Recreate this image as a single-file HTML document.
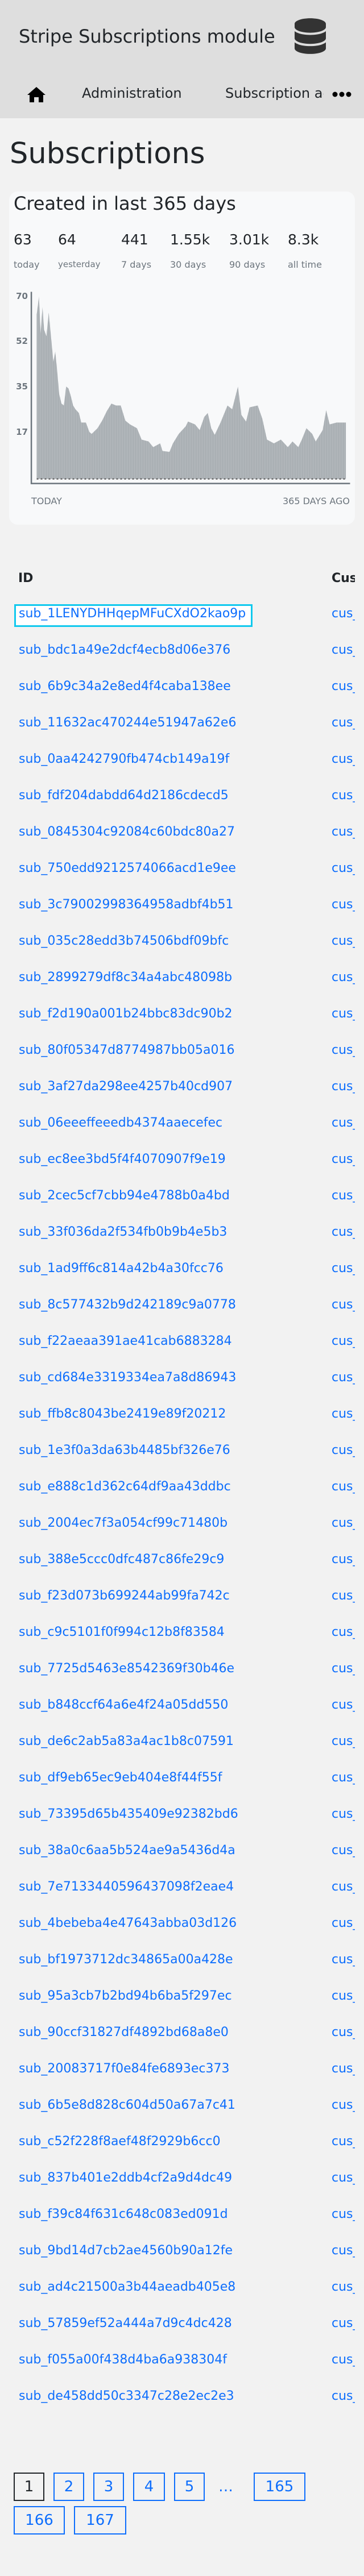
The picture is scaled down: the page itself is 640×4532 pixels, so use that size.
<!DOCTYPE html>
<html><head><meta charset="utf-8">
<style>
*{margin:0;padding:0;box-sizing:border-box}
body{width:640px;height:4532px;background:#f2f2f2;font-family:"DejaVu Sans","Liberation Sans",sans-serif;color:#212529;position:relative;overflow:hidden}
.a{position:absolute;white-space:nowrap;line-height:1}
#hdr{position:absolute;left:0;top:0;width:640px;height:208px;background:#dedede}
#card{position:absolute;left:16px;top:337px;width:608px;height:586px;background:#f8f9fa;border-radius:15px}
.n{font-size:25px;color:#212529}
.l{font-size:16px;color:#6c757d}
.y{font-size:15px;font-weight:bold;color:#6c757d;width:40px;text-align:right;left:9px}
#rows{position:absolute;left:0;top:1048px;width:624px;overflow:hidden}
.r{height:64px;line-height:64px;font-size:22px;position:relative}
.r a{color:#0d6efd;text-decoration:none;position:absolute;left:33px}
.r b{color:#0d6efd;font-weight:normal;position:absolute;left:583px}
.pg{position:absolute;height:50px;border:2px solid #0d6efd;color:#0d6efd;font-size:26px;line-height:46px;text-align:center}
</style></head><body>
<div id="hdr"></div>
<div class="a" style="left:33px;top:48px;font-size:32px;color:#212529">Stripe Subscriptions module</div>
<svg style="position:absolute;left:518px;top:32px" width="55" height="63" viewBox="0 0 448 512"><path fill="#333" d="M448 80v48c0 44.2-100.3 80-224 80S0 172.2 0 128V80C0 35.8 100.3 0 224 0S448 35.8 448 80zM393.2 214.7c20.8-7.4 39.9-16.9 54.8-28.6V288c0 44.2-100.3 80-224 80S0 332.2 0 288V186.1c14.9 11.8 34 21.2 54.8 28.6C99.7 230.7 159.5 240 224 240s124.3-9.3 169.2-25.3zM0 346.1c14.9 11.8 34 21.2 54.8 28.6C99.7 390.7 159.5 400 224 400s124.3-9.3 169.2-25.3c20.8-7.4 39.9-16.9 54.8-28.6V432c0 44.2-100.3 80-224 80S0 476.2 0 432V346.1z"/></svg>
<svg style="position:absolute;left:48px;top:153px" width="32" height="27" viewBox="0 0 32 27"><path d="M16 0 L32 14 L28 14 L28 27 L20 27 L20 18 L12 18 L12 27 L4 27 L4 14 L0 14 Z" fill="#000"/></svg>
<div class="a" style="left:144px;top:152px;font-size:24px">Administration</div>
<div class="a" style="left:396px;top:152px;font-size:24px;width:173px;overflow:hidden">Subscription admin</div>
<svg style="position:absolute;left:584px;top:160px" width="34" height="12"><circle cx="5" cy="6" r="4.5" fill="#000"/><circle cx="17" cy="6" r="4.5" fill="#000"/><circle cx="29" cy="6" r="4.5" fill="#000"/></svg>

<div class="a" style="left:17px;top:245px;font-size:51px">Subscriptions</div>
<div id="card"></div>
<div class="a" style="left:24px;top:342px;font-size:32px">Created in last 365 days</div>
<div class="a n" style="left:24px;top:409px">63</div>
<div class="a n" style="left:102px;top:409px">64</div>
<div class="a n" style="left:213px;top:409px">441</div>
<div class="a n" style="left:299px;top:409px">1.55k</div>
<div class="a n" style="left:403px;top:409px">3.01k</div>
<div class="a n" style="left:506px;top:409px">8.3k</div>
<div class="a l" style="left:24px;top:458px">today</div>
<div class="a l" style="left:102px;top:458px;font-size:15px">yesterday</div>
<div class="a l" style="left:213px;top:458px">7 days</div>
<div class="a l" style="left:299px;top:458px">30 days</div>
<div class="a l" style="left:403px;top:458px">90 days</div>
<div class="a l" style="left:506px;top:458px">all time</div>

<svg style="position:absolute;left:0;top:480px" width="640" height="500" viewBox="0 0 1568 1500" preserveAspectRatio="none">
<defs><pattern id="p" width="3.675" height="10" patternUnits="userSpaceOnUse"><rect width="3.675" height="10" fill="#b7bcc0"/><rect width="0.9" height="10" fill="#8d949a"/></pattern></defs>
<path fill="url(#p)" d="M158,1088 L158,220 L168,125 L175,320 L183,180 L190,300 L200,335 L210,210 L220,340 L230,470 L238,415 L245,500 L255,640 L265,690 L275,700 L285,600 L295,610 L305,650 L315,700 L325,720 L340,740 L350,790 L370,790 L385,840 L395,850 L420,820 L440,780 L460,730 L480,690 L500,700 L520,700 L540,780 L560,800 L590,820 L610,880 L640,890 L660,920 L690,900 L700,940 L730,945 L745,900 L770,850 L800,810 L810,785 L840,800 L860,830 L880,760 L895,740 L910,820 L925,855 L950,790 L980,700 L1000,720 L1025,600 L1040,750 L1060,785 L1075,710 L1110,700 L1130,770 L1150,880 L1180,900 L1210,880 L1240,920 L1260,890 L1285,920 L1300,880 L1320,820 L1345,850 L1360,890 L1390,830 L1405,725 L1420,800 L1450,790 L1490,790 L1490,1088 Z"/>
<path d="M158,1088 H1490" stroke="#555" stroke-width="2" stroke-dasharray="3 4" vector-effect="non-scaling-stroke"/>
<path d="M135,100 V1112 H1508" fill="none" stroke="#6c757d" stroke-width="2.5" vector-effect="non-scaling-stroke"/>
</svg>
<div class="a y" style="top:514px">70</div>
<div class="a y" style="top:593px">52</div>
<div class="a y" style="top:673px">35</div>
<div class="a y" style="top:753px">17</div>
<div class="a" style="left:55px;top:874px;font-size:16px;color:#6c757d">TODAY</div>
<div class="a" style="left:455px;width:160px;text-align:right;top:874px;font-size:16px;color:#6c757d">365 DAYS AGO</div>

<div class="a" style="left:32px;top:1007px;font-size:22px;font-weight:bold">ID</div>
<div class="a" style="left:583px;top:1007px;font-size:22px;font-weight:bold;width:41px;overflow:hidden">Customer</div>
<div style="position:absolute;left:25px;top:1063px;width:419px;height:40px;border:3px solid #11c9ee;background:#fff"></div>
<div id="rows">
<div class="r"><a>sub_1LENYDHHqepMFuCXdO2kao9p</a><b>cus_abc</b></div>
<div class="r"><a>sub_bdc1a49e2dcf4ecb8d06e376</a><b>cus_abc</b></div>
<div class="r"><a>sub_6b9c34a2e8ed4f4caba138ee</a><b>cus_abc</b></div>
<div class="r"><a>sub_11632ac470244e51947a62e6</a><b>cus_abc</b></div>
<div class="r"><a>sub_0aa4242790fb474cb149a19f</a><b>cus_abc</b></div>
<div class="r"><a>sub_fdf204dabdd64d2186cdecd5</a><b>cus_abc</b></div>
<div class="r"><a>sub_0845304c92084c60bdc80a27</a><b>cus_abc</b></div>
<div class="r"><a>sub_750edd9212574066acd1e9ee</a><b>cus_abc</b></div>
<div class="r"><a>sub_3c79002998364958adbf4b51</a><b>cus_abc</b></div>
<div class="r"><a>sub_035c28edd3b74506bdf09bfc</a><b>cus_abc</b></div>
<div class="r"><a>sub_2899279df8c34a4abc48098b</a><b>cus_abc</b></div>
<div class="r"><a>sub_f2d190a001b24bbc83dc90b2</a><b>cus_abc</b></div>
<div class="r"><a>sub_80f05347d8774987bb05a016</a><b>cus_abc</b></div>
<div class="r"><a>sub_3af27da298ee4257b40cd907</a><b>cus_abc</b></div>
<div class="r"><a>sub_06eeeffeeedb4374aaecefec</a><b>cus_abc</b></div>
<div class="r"><a>sub_ec8ee3bd5f4f4070907f9e19</a><b>cus_abc</b></div>
<div class="r"><a>sub_2cec5cf7cbb94e4788b0a4bd</a><b>cus_abc</b></div>
<div class="r"><a>sub_33f036da2f534fb0b9b4e5b3</a><b>cus_abc</b></div>
<div class="r"><a>sub_1ad9ff6c814a42b4a30fcc76</a><b>cus_abc</b></div>
<div class="r"><a>sub_8c577432b9d242189c9a0778</a><b>cus_abc</b></div>
<div class="r"><a>sub_f22aeaa391ae41cab6883284</a><b>cus_abc</b></div>
<div class="r"><a>sub_cd684e3319334ea7a8d86943</a><b>cus_abc</b></div>
<div class="r"><a>sub_ffb8c8043be2419e89f20212</a><b>cus_abc</b></div>
<div class="r"><a>sub_1e3f0a3da63b4485bf326e76</a><b>cus_abc</b></div>
<div class="r"><a>sub_e888c1d362c64df9aa43ddbc</a><b>cus_abc</b></div>
<div class="r"><a>sub_2004ec7f3a054cf99c71480b</a><b>cus_abc</b></div>
<div class="r"><a>sub_388e5ccc0dfc487c86fe29c9</a><b>cus_abc</b></div>
<div class="r"><a>sub_f23d073b699244ab99fa742c</a><b>cus_abc</b></div>
<div class="r"><a>sub_c9c5101f0f994c12b8f83584</a><b>cus_abc</b></div>
<div class="r"><a>sub_7725d5463e8542369f30b46e</a><b>cus_abc</b></div>
<div class="r"><a>sub_b848ccf64a6e4f24a05dd550</a><b>cus_abc</b></div>
<div class="r"><a>sub_de6c2ab5a83a4ac1b8c07591</a><b>cus_abc</b></div>
<div class="r"><a>sub_df9eb65ec9eb404e8f44f55f</a><b>cus_abc</b></div>
<div class="r"><a>sub_73395d65b435409e92382bd6</a><b>cus_abc</b></div>
<div class="r"><a>sub_38a0c6aa5b524ae9a5436d4a</a><b>cus_abc</b></div>
<div class="r"><a>sub_7e7133440596437098f2eae4</a><b>cus_abc</b></div>
<div class="r"><a>sub_4bebeba4e47643abba03d126</a><b>cus_abc</b></div>
<div class="r"><a>sub_bf1973712dc34865a00a428e</a><b>cus_abc</b></div>
<div class="r"><a>sub_95a3cb7b2bd94b6ba5f297ec</a><b>cus_abc</b></div>
<div class="r"><a>sub_90ccf31827df4892bd68a8e0</a><b>cus_abc</b></div>
<div class="r"><a>sub_20083717f0e84fe6893ec373</a><b>cus_abc</b></div>
<div class="r"><a>sub_6b5e8d828c604d50a67a7c41</a><b>cus_abc</b></div>
<div class="r"><a>sub_c52f228f8aef48f2929b6cc0</a><b>cus_abc</b></div>
<div class="r"><a>sub_837b401e2ddb4cf2a9d4dc49</a><b>cus_abc</b></div>
<div class="r"><a>sub_f39c84f631c648c083ed091d</a><b>cus_abc</b></div>
<div class="r"><a>sub_9bd14d7cb2ae4560b90a12fe</a><b>cus_abc</b></div>
<div class="r"><a>sub_ad4c21500a3b44aeadb405e8</a><b>cus_abc</b></div>
<div class="r"><a>sub_57859ef52a444a7d9c4dc428</a><b>cus_abc</b></div>
<div class="r"><a>sub_f055a00f438d4ba6a938304f</a><b>cus_abc</b></div>
<div class="r"><a>sub_de458dd50c3347c28e2ec2e3</a><b>cus_abc</b></div>
</div>

<div class="pg" style="left:24px;top:4350px;width:54px;border-color:#212529;color:#212529">1</div>
<div class="pg" style="left:94px;top:4350px;width:54px">2</div>
<div class="pg" style="left:164px;top:4350px;width:54px">3</div>
<div class="pg" style="left:234px;top:4350px;width:56px">4</div>
<div class="pg" style="left:306px;top:4350px;width:54px">5</div>
<div class="a" style="left:384px;top:4362px;font-size:26px;color:#0d6efd">…</div>
<div class="pg" style="left:446px;top:4350px;width:91px">165</div>
<div class="pg" style="left:24px;top:4409px;width:90px">166</div>
<div class="pg" style="left:130px;top:4409px;width:92px">167</div>
</body></html>
